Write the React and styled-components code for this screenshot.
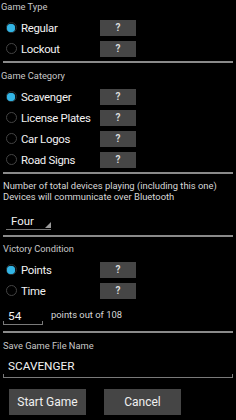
import React from 'react';
import styled, { createGlobalStyle } from 'styled-components';

const GlobalStyle = createGlobalStyle`
  html, body {
    margin: 0;
    padding: 0;
    background: #000;
  }
  body {
    font-family: Roboto, "Liberation Sans", sans-serif;
    color: #f0f0f0;
  }
`;

const Screen = styled.div`
  width: 236px;
  height: 420px;
  background: #000;
  overflow: hidden;
  display: flex;
  flex-direction: column;
`;

const SectionLabel = styled.div`
  font-size: 9.3px;
  line-height: 14px;
  color: #c8c8c8;
  padding-left: ${p => p.$indent || 1}px;
  margin-top: ${p => p.$top || 0}px;
  margin-bottom: 3px;
`;

const Row = styled.div`
  height: 21px;
  display: flex;
  align-items: center;
`;

const RadioSlot = styled.div`
  width: 21px;
  display: flex;
  justify-content: center;
  padding-left: 1px;
  box-sizing: border-box;
`;

const Radio = styled.span`
  width: 11px;
  height: 11px;
  border-radius: 50%;
  box-sizing: border-box;
  border: 1px solid ${p => (p.$checked ? '#2a2a2a' : '#444')};
  display: flex;
  align-items: center;
  justify-content: center;
  &::after {
    content: '';
    width: 8px;
    height: 8px;
    border-radius: 50%;
    background: ${p => (p.$checked ? '#33b5e5' : 'transparent')};
    box-shadow: ${p => (p.$checked ? '0 0 1px #33b5e5' : 'none')};
  }
`;

const OptionText = styled.span`
  font-size: 11.4px;
  letter-spacing: -0.3px;
  color: #f2f2f2;
  width: 79px;
  white-space: nowrap;
`;

const HelpButton = styled.button`
  width: 36px;
  height: 16px;
  border: none;
  padding: 0;
  background: #464646;
  color: #dcdcdc;
  font-family: Roboto, "Liberation Sans", sans-serif;
  font-size: 10px;
  font-weight: bold;
  line-height: 16px;
`;

const Divider = styled.div`
  height: 2px;
  background: #8a8a8a;
  margin: ${p => p.$top || 2}px 3px 0 3px;
`;

const Note = styled.div`
  font-size: 9.4px;
  line-height: 11px;
  color: #d8d8d8;
  padding-left: 3px;
  margin-top: 6px;
  white-space: nowrap;
`;

const Spinner = styled.div`
  position: relative;
  width: 45px;
  height: 17px;
  margin: 11px 0 0 6px;
  border-bottom: 1px solid #777;
  box-sizing: border-box;
  padding-left: 5px;
  font-size: 11.4px;
  line-height: 16px;
  color: #f2f2f2;
  &::after {
    content: '';
    position: absolute;
    right: 0;
    bottom: 1px;
    width: 0;
    height: 0;
    border-left: 6px solid transparent;
    border-bottom: 6px solid #9a9a9a;
  }
`;

const FieldRow = styled.div`
  display: flex;
  align-items: flex-start;
  margin-top: 8px;
`;

const Field = styled.div`
  position: relative;
  width: ${p => p.$width}px;
  height: ${p => p.$height}px;
  margin-left: 3px;
  box-sizing: border-box;
  border-bottom: 1px solid #7a7a7a;
  padding-left: 5px;
  font-size: 11.8px;
  line-height: ${p => p.$height - 1}px;
  color: #f2f2f2;
  &::before,
  &::after {
    content: '';
    position: absolute;
    bottom: 0;
    width: 1px;
    height: 3px;
    background: #7a7a7a;
  }
  &::before { left: 0; }
  &::after { right: 0; }
`;

const FieldHint = styled.span`
  font-size: 9.4px;
  line-height: 11px;
  color: #d8d8d8;
  margin-left: 8px;
`;

const ButtonBar = styled.div`
  display: flex;
  gap: 18px;
  padding-left: 9px;
  margin-top: 11px;
`;

const ActionButton = styled.button`
  width: 77px;
  height: 26px;
  border: none;
  padding: 0;
  background: #454545;
  color: #f0f0f0;
  font-family: Roboto, "Liberation Sans", sans-serif;
  font-size: 12px;
`;

function Option({ label, checked }) {
  return (
    <Row>
      <RadioSlot>
        <Radio $checked={checked} />
      </RadioSlot>
      <OptionText>{label}</OptionText>
      <HelpButton>?</HelpButton>
    </Row>
  );
}

export default function App() {
  return (
    <Screen>
      <GlobalStyle />
      <SectionLabel>Game Type</SectionLabel>
      <Option label="Regular" checked />
      <Option label="Lockout" />
      <Divider />

      <SectionLabel $top={6}>Game Category</SectionLabel>
      <Option label="Scavenger" checked />
      <Option label="License Plates" />
      <Option label="Car Logos" />
      <Option label="Road Signs" />
      <Divider />

      <Note>
        Number of total devices playing (including this one)
        <br />
        Devices will communicate over Bluetooth
      </Note>
      <Spinner>Four</Spinner>
      <Divider $top={5} />

      <SectionLabel $top={5} $indent={3}>Victory Condition</SectionLabel>
      <Option label="Points" checked />
      <Option label="Time" />
      <FieldRow>
        <Field $width={40} $height={16}>54</Field>
        <FieldHint>points out of 108</FieldHint>
      </FieldRow>
      <Divider $top={6} />

      <SectionLabel $top={6} $indent={3}>Save Game File Name</SectionLabel>
      <Field $width={230} $height={22}>SCAVENGER</Field>
      <ButtonBar>
        <ActionButton>Start Game</ActionButton>
        <ActionButton>Cancel</ActionButton>
      </ButtonBar>
    </Screen>
  );
}
